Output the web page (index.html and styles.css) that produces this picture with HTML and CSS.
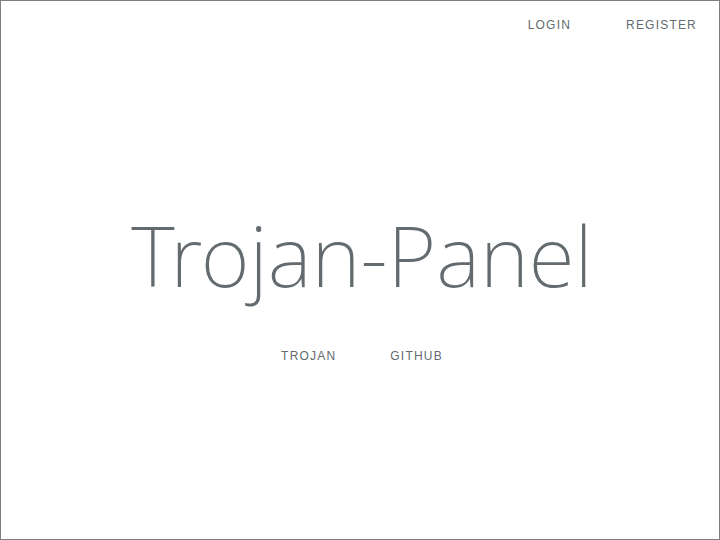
FILE: index.html
```html
<!DOCTYPE html>
<html>
<head>
<meta charset="utf-8">
<link rel="stylesheet" href="styles.css">
</head>
<body>
<div class="page">
  <nav class="top-right">
    <a href="#" class="link">Login</a>
    <a href="#" class="link">Register</a>
  </nav>
  <main class="content">
    <div class="title">Trojan-Panel</div>
    <div class="links">
      <a href="#" class="link">Trojan</a>
      <a href="#" class="link">GitHub</a>
    </div>
  </main>
</div>
</body>
</html>
```
FILE: styles.css
```css
html, body {
  margin: 0;
  padding: 0;
  background: #fff;
}
.page {
  position: relative;
  box-sizing: border-box;
  width: 720px;
  height: 540px;
  border: 1px solid #7f7f7f;
  display: flex;
  align-items: center;
  justify-content: center;
  color: #636b6f;
}
.top-right {
  position: absolute;
  top: 17px;
  right: 0;
  display: flex;
}
.top-right .link:first-child {
  padding-right: 28px;
}
.top-right .link:last-child {
  padding-right: 22px;
}
.content {
  display: flex;
  flex-direction: column;
  align-items: center;
  margin-left: 4px;
}
.title {
  font-family: "Noto Sans", sans-serif;
  font-weight: 200;
  font-size: 84px;
  line-height: 100px;
  margin-top: 28px;
  margin-bottom: 44px;
}
.links {
  display: flex;
}
.link {
  color: #636b6f;
  padding: 0 27px;
  font-family: "Liberation Sans", Arial, sans-serif;
  font-size: 12px;
  font-weight: 400;
  letter-spacing: 1.2px;
  text-decoration: none;
  text-transform: uppercase;
}
```
